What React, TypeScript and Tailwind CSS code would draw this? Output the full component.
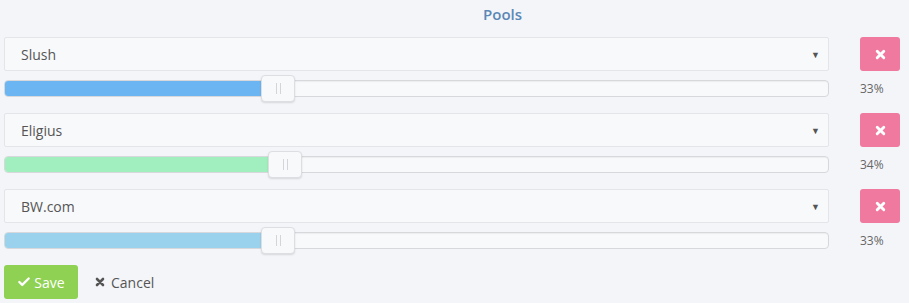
import { Check } from 'lucide-react'

interface Pool {
  name: string
  pct: number
  fill: number
  color: string
}

const pools: Pool[] = [
  { name: 'Slush',   pct: 33, fill: 256, color: 'bg-[#6bb6f2]' },
  { name: 'Eligius', pct: 34, fill: 263, color: 'bg-[#a1efbe]' },
  { name: 'BW.com',  pct: 33, fill: 256, color: 'bg-[#9ad1ec]' },
]

function TimesIcon({ className }: { className?: string }) {
  return (
    <svg className={className} viewBox="0 0 10 10" fill="none" stroke="currentColor" strokeWidth={2.6} strokeLinecap="round">
      <path d="M2 2l6 6M8 2l-6 6" />
    </svg>
  )
}

function PoolRow({ pool }: { pool: Pool }) {
  return (
    <div className="flex gap-[31px]">
      <div className="w-[825px] flex flex-col gap-[9px]">
        <div className="h-[34px] bg-[#f8f9fb] border border-[#e3e5e8] rounded-[2px] flex items-center justify-between pl-4 pr-2">
          <span className="text-[14px] text-[#555]">{pool.name}</span>
          <span className="text-[9px] text-[#555] leading-none">▼</span>
        </div>
        <div className="relative h-[17px] bg-[#f8f9fb] border border-[#d6d8db] rounded-[4px] shadow-[inset_0_1px_1px_rgba(0,0,0,0.05)]">
          <div className={`h-full rounded-l-[3px] ${pool.color}`} style={{ width: pool.fill }} />
          <div
            className="absolute top-[-6px] w-[34px] h-[27px] bg-[#f8f9fb] border border-[#dcdee1] rounded-[4px] shadow-[0_1px_2px_rgba(0,0,0,0.12)] flex items-center justify-center gap-[3px]"
            style={{ left: pool.fill }}
          >
            <span className="w-px h-[11px] bg-[#d3d5d8]" />
            <span className="w-px h-[11px] bg-[#d3d5d8]" />
          </div>
        </div>
      </div>
      <div className="w-[40px] flex flex-col">
        <button className="h-[34px] w-[40px] bg-[#f0799f] rounded-[3px] flex items-center justify-center text-white">
          <TimesIcon className="w-[11px] h-[11px]" />
        </button>
        <span className="mt-[9px] text-[12px] leading-[17px] text-[#666]">{pool.pct}%</span>
      </div>
    </div>
  )
}

export default function App() {
  return (
    <div className="w-[909px] h-[303px] bg-[#f4f5f9] pl-1 pt-[4px] font-['Open_Sans',sans-serif]">
      <h2 className="pl-[479px] text-[15px] font-semibold text-[#5b88b6] leading-[20px]">Pools</h2>
      <div className="mt-[13px] flex flex-col gap-[16px]">
        {pools.map(p => <PoolRow key={p.name} pool={p} />)}
      </div>
      <div className="mt-[16px] flex items-center gap-[17px]">
        <button className="h-[34px] w-[74px] bg-[#8fd153] rounded-[3px] text-white text-[14px] flex items-center justify-center gap-[3px]">
          <Check className="w-[14px] h-[14px]" strokeWidth={4} />
          Save
        </button>
        <button className="flex items-center gap-[6px] text-[14px] text-[#555]">
          <TimesIcon className="w-[10px] h-[10px] text-[#555]" />
          Cancel
        </button>
      </div>
    </div>
  )
}
